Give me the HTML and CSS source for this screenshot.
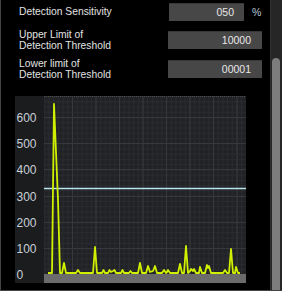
FILE: index.html
```html
<!DOCTYPE html>
<html>
<head>
<meta charset="utf-8">
<link rel="stylesheet" href="styles.css">
</head>
<body>
<div class="frame">
  <div class="content">
    <div class="row">
      <div class="label">Detection Sensitivity</div>
      <div class="field short">050</div>
      <div class="unit">%</div>
    </div>
    <div class="row row2">
      <div class="label">Upper Limit of<br>Detection Threshold</div>
      <div class="field">10000</div>
    </div>
    <div class="row row3">
      <div class="label">Lower limit of<br>Detection Threshold</div>
      <div class="field">00001</div>
    </div>
    <div class="chart">
      <svg class="chart-svg" width="231" height="187" viewBox="0 0 231 187">
        <defs>
          <pattern id="minor" x="57" y="21" width="4.7" height="5.24" patternUnits="userSpaceOnUse">
            <rect width="4.7" height="5.24" fill="#212225"/>
            <line x1="0.5" y1="0" x2="0.5" y2="5.24" stroke="#2a2b2e" stroke-width="1"/>
            <line x1="0" y1="0.5" x2="4.7" y2="0.5" stroke="#2a2b2e" stroke-width="1"/>
          </pattern>
        </defs>
        <rect x="0" y="0" width="231" height="187" fill="#1b1c1e"/>
        <rect x="29" y="0" width="202" height="187" fill="url(#minor)"/>
        <line x1="29" y1="0.5" x2="231" y2="0.5" stroke="#4a4a4a" stroke-dasharray="1 1"/>
        <g stroke="#37383b" stroke-width="1">
          <line x1="29" y1="152.5" x2="231" y2="152.5"/>
          <line x1="29" y1="126.5" x2="231" y2="126.5"/>
          <line x1="29" y1="100.5" x2="231" y2="100.5"/>
          <line x1="29" y1="73.5" x2="231" y2="73.5"/>
          <line x1="29" y1="47.5" x2="231" y2="47.5"/>
          <line x1="29" y1="21.5" x2="231" y2="21.5"/>
          <line x1="57.5" y1="0" x2="57.5" y2="187"/>
          <line x1="81" y1="0" x2="81" y2="187"/>
          <line x1="104.5" y1="0" x2="104.5" y2="187"/>
          <line x1="128" y1="0" x2="128" y2="187"/>
          <line x1="151.5" y1="0" x2="151.5" y2="187"/>
          <line x1="175" y1="0" x2="175" y2="187"/>
          <line x1="198.5" y1="0" x2="198.5" y2="187"/>
          <line x1="222" y1="0" x2="222" y2="187"/>
        </g>
        <rect x="29" y="178" width="202" height="9" fill="#6b6b6b"/>
        <g class="axis">
          <text x="1.5" y="25.5">600</text>
          <text x="1.5" y="51.5">500</text>
          <text x="1.5" y="78">400</text>
          <text x="1.5" y="104.5">300</text>
          <text x="1.5" y="130.5">200</text>
          <text x="1.5" y="156.5">100</text>
          <text x="1.5" y="182.5">0</text>
        </g>
        <line x1="29" y1="92.5" x2="231" y2="92.5" stroke="#b8e4ee" stroke-width="1.6"/>
        <polyline fill="none" stroke="#d0f000" stroke-width="1.8" stroke-linejoin="round"
          points="33,177 37,177 39,8 43,104 45,177 47,177 49,167 51,177 61,177 63,174 65,177 78,177 80,151 82,177 87,177 88.5,174 90,177 93,177 94.5,174 96,176 98,175 99.5,174 101,177 106,177 107.5,174 109,177 114,177 115.5,175 117,177 123,177 125,167 127,177 131,177 133,170 135,176 138,175 140,170 142,177 147,177 149,174 151,177 152,176 153,174 155,177 163,177 165,168 167,177 169,177 171,150 173,177 175,175 176,173 178,175 179,173 181,177 184,177 185,171 187,177 190,177 192,169 193,172 194,170 196,177 208,177 210,174 212,177 214,177 216,153 218,177 220,177 221,171 223,177 225,177"/>
      </svg>
    </div>
  </div>
  <div class="scrollbar">
    <div class="thumb"></div>
  </div>
</div>
</body>
</html>
```
FILE: styles.css
```css
html, body {
  margin: 0;
  padding: 0;
  background: #000;
}
.frame {
  width: 282px;
  height: 291px;
  box-sizing: border-box;
  display: flex;
  background: #000;
  border-left: 1px solid #444;
  border-bottom: 1px solid #444;
  overflow: hidden;
  font-family: "Liberation Sans", Arial, sans-serif;
}
.content {
  flex: 1;
  padding-top: 3px;
  padding-left: 18px;
}
.row {
  display: flex;
  align-items: center;
  height: 18px;
}
.row2 {
  margin-top: 10px;
}
.row3 {
  margin-top: 11px;
}
.label {
  width: 149px;
  flex: none;
  color: #e2e2e2;
  font-size: 10.3px;
  line-height: 11.5px;
  white-space: nowrap;
}
.field {
  box-sizing: border-box;
  width: 94px;
  height: 18px;
  background: #474747;
  border-top: 1px solid #383838;
  color: #e8e8e8;
  font-size: 10.5px;
  line-height: 17px;
  text-align: right;
  padding-right: 11px;
}
.field.short {
  width: 75px;
  margin-left: 1px;
  padding-right: 10px;
}
.unit {
  margin-left: 8px;
  color: #b9cad9;
  font-size: 10.5px;
}
.chart {
  margin-top: 18px;
  margin-left: -4px;
  width: 231px;
  height: 187px;
}
.chart-svg {
  display: block;
}
.axis text {
  fill: #c8d0d8;
  font-family: "Liberation Sans", Arial, sans-serif;
  font-size: 12px;
}
.scrollbar {
  width: 12px;
  flex: none;
  background: #262626;
  border-left: 1px solid #333;
  padding-left: 1px;
  box-sizing: border-box;
}
.thumb {
  margin-top: 58px;
  width: 8px;
  height: 240px;
  background: #7d7d7d;
  border-radius: 4px 4px 0 0;
}
```
